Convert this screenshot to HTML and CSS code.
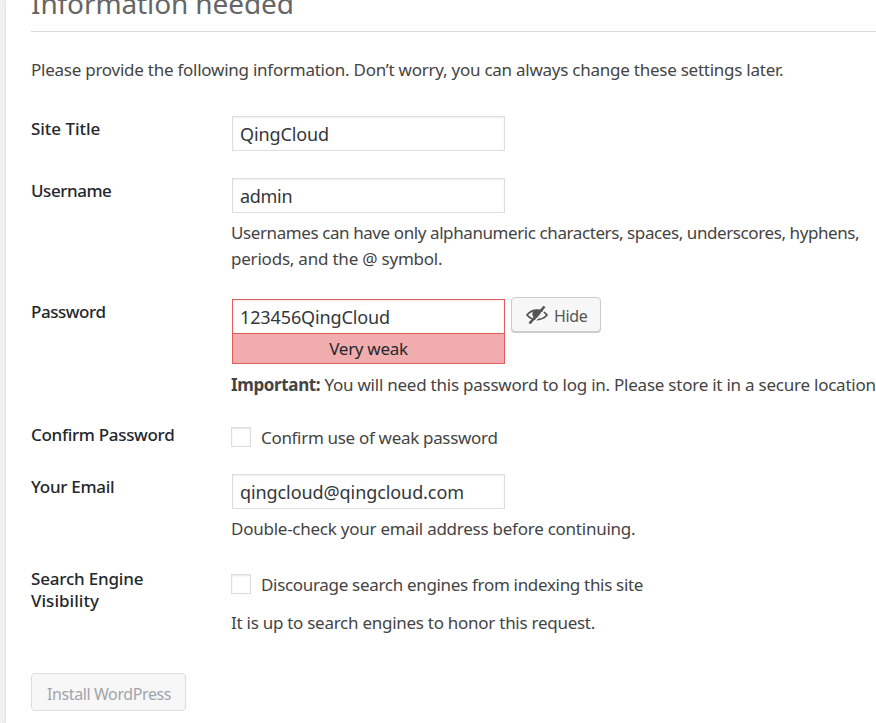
FILE: index.html
```
<!DOCTYPE html>
<html lang="en">
<head><meta charset="utf-8"><title>Installation</title><link rel="stylesheet" href="styles.css"></head>
<body>
<main class="card">
<h1>Information needed</h1>
<p class="intro">Please provide the following information. Don’t worry, you can always change these settings later.</p>
<form>
<div class="row r-title"><div class="label">Site Title</div><div class="field"><div class="input">QingCloud</div></div></div>
<div class="row r-user"><div class="label">Username</div><div class="field"><div class="input">admin</div><p class="desc"><span class="rule">Usernames can have only alphanumeric characters, spaces, underscores, hyphens,</span><br>periods, and the @ symbol.</p></div></div>
<div class="row r-pass"><div class="label">Password</div><div class="field"><div class="password"><div><div class="input bad">123456QingCloud</div><div class="strength">Very weak</div></div>
<button type="button" class="hide"><svg viewBox="0 0 24 22" width="24" height="22"><path class="eye" d="M2 11C7 4.5 17 4.5 22 11C17 17 7 17 2 11Z"/><circle cx="11.5" cy="10" r="4.2"/><path class="gap" d="M7 20.5L21.5 4"/><path class="slash" d="M4.5 19.5L19.5 2.5"/></svg><span>Hide</span></button></div>
<p class="desc pw"><b>Important:</b> You will need this password to log in. Please store it in a secure location</p></div></div>
<div class="row r-confirm"><div class="label">Confirm Password</div><div class="field"><label class="check"><i></i><span>Confirm use of weak password</span></label></div></div>
<div class="row r-mail"><div class="label">Your Email</div><div class="field"><div class="input">qingcloud@qingcloud.com</div><p class="desc">Double-check your email address before continuing.</p></div></div>
<div class="row r-search"><div class="label">Search Engine<br><span class="second">Visibility</span></div><div class="field"><label class="check"><i></i><span>Discourage search engines from indexing this site</span></label><p class="desc">It is up to search engines to honor this request.</p></div></div>
<button type="button" class="install" disabled>Install WordPress</button>
</form>
</main>
</body>
</html>
```
FILE: styles.css
```
*{box-sizing:border-box}
body{margin:0;height:723px;overflow:hidden;background:#f1f1f1;color:#444;font:400 17px/26px "Noto Sans",sans-serif}
.card{height:723px;margin-left:6px;padding-left:25px;background:#fff;box-shadow:0 1px 3px rgba(0,0,0,.13);white-space:nowrap;display:flow-root;overflow:hidden}
h1{margin:-16px 0 0;height:48px;border-bottom:1px solid #dadada;color:#666;font-size:28px;line-height:38px;font-weight:400;letter-spacing:-.11px}
p{margin:0}
.intro{margin:25px 0 33px;height:26px;letter-spacing:-.248px}
.row{display:grid;grid-template-columns:200px 1fr;align-items:start}
.label{padding-top:2px;color:#23282d;font-weight:550;line-height:22px}
.r-title{height:62px}
.r-user{height:121px}
.r-pass{height:123px}
.r-confirm{height:52px}
.r-mail{height:92px}
.r-search{height:107px}
.r-title .label{letter-spacing:-.05px}
.r-user .label,.r-pass .label{letter-spacing:-.45px}
.r-confirm .label{letter-spacing:-.31px}
.r-mail .label{letter-spacing:-.28px}
.r-search .label{letter-spacing:-.2px}
.r-search .second{letter-spacing:.03px}
.input{width:273px;height:35px;margin-left:1px;padding:4px 7px;border:1px solid #ddd;box-shadow:inset 0 1px 2px rgba(0,0,0,.07);color:#32373c;background:#fff;font-size:18px;letter-spacing:-.12px}
.r-user .input{letter-spacing:-.3px}
.r-mail .input{letter-spacing:-.085px}
.desc{margin-top:7px;letter-spacing:-.25px}
.r-user .desc{letter-spacing:-.215px}
.r-user .rule{letter-spacing:-.41px}
.password{display:flex;align-items:flex-start;height:65px}
.input.bad{border-color:#e35b5b}
.strength{width:273px;height:31px;margin:-1px 0 0 1px;border:1px solid #e35b5b;background:#f1adad;color:#23282d;text-align:center;line-height:30px;letter-spacing:-.3px}
.desc.pw{margin-top:8px;letter-spacing:-.235px}
.pw b{letter-spacing:-.37px}
button{font:inherit;border:1px solid #ccc;border-radius:4px;background:#f7f7f7;color:#555;font-size:16px}
.hide{display:flex;align-items:center;gap:5px;width:90px;height:35px;margin:-2px 0 0 6px;padding:3px 0 0 13px;box-shadow:0 1px 0 #ccc;letter-spacing:-.33px}
.hide svg{flex:none;margin-top:-3px;fill:#555}
.hide .eye{fill:none;stroke:#555;stroke-width:1.8}
.gap{stroke:#f7f7f7;stroke-width:1.5}
.slash{stroke:#555;stroke-width:2.6}
.check{display:flex;gap:10px;padding-top:3px;letter-spacing:-.315px}
.check i{width:20px;height:20px;margin-top:2px;border:1px solid #ddd;background:#fff;box-shadow:inset 0 1px 2px rgba(0,0,0,.1)}
.r-search .check{padding-top:6px}
.r-search .desc{margin-top:12px;letter-spacing:-.27px}
.install{display:block;width:155px;height:38px;padding:3px 0 0 15px;border-color:#ddd;color:#a0a5aa;text-align:left;letter-spacing:-.4px}
```
